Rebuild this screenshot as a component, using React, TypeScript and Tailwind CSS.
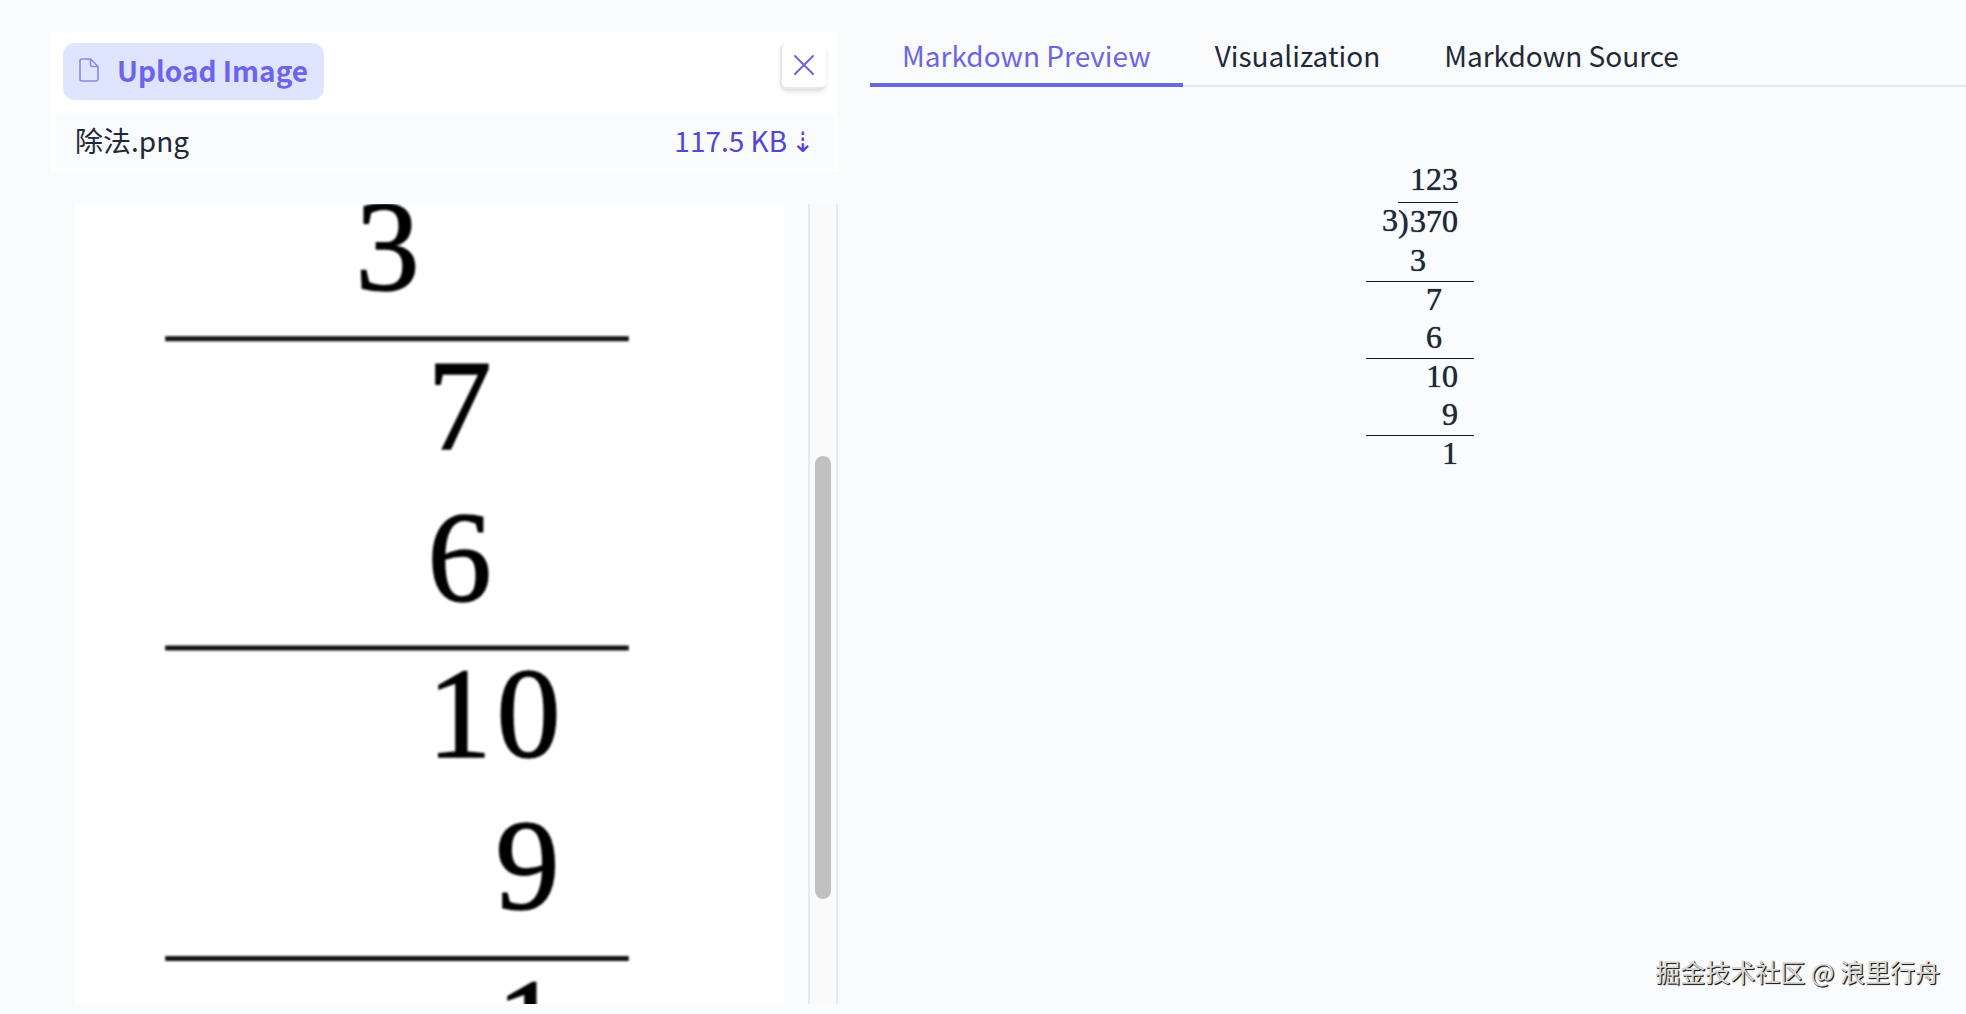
import React, { useState } from "react";

const TABS = ["Markdown Preview", "Visualization", "Markdown Source"];

// Steps under the dividend, "col" counts digit columns left empty on the right
const STEPS = [
  { value: "3", col: 2, line: true },
  { value: "7", col: 1, line: false },
  { value: "6", col: 1, line: true },
  { value: "10", col: 0, line: false },
  { value: "9", col: 0, line: true },
  { value: "1", col: 0, line: false },
];

const DIGITS = [
  { value: "3", x: 313, y: 86 },
  { value: "7", x: 385, y: 245 },
  { value: "6", x: 385, y: 397 },
  { value: "1", x: 385, y: 552 },
  { value: "0", x: 454, y: 552 },
  { value: "9", x: 453, y: 704 },
  { value: "1", x: 454, y: 863 },
];

function FileIcon() {
  return (
    <svg width="20" height="24" viewBox="0 0 20 24" fill="none" stroke="#8f88e3" strokeWidth="1.6" strokeLinejoin="round" aria-hidden="true">
      <path d="M11.5 1H3a2 2 0 0 0-2 2v18a2 2 0 0 0 2 2h14a2 2 0 0 0 2-2V8.5z" />
      <path d="M11.5 1v5.5a2 2 0 0 0 2 2H19" />
    </svg>
  );
}

function CloseIcon() {
  return (
    <svg width="22" height="22" viewBox="0 0 22 22" fill="none" stroke="#6d63e3" strokeWidth="2" strokeLinecap="round" aria-hidden="true">
      <path d="M2 2l18 18M20 2L2 20" />
    </svg>
  );
}

function UploadedImage() {
  return (
    <svg viewBox="0 0 710 799" preserveAspectRatio="xMidYMin slice" className="block h-full w-full" role="img" aria-label="除法.png">
      <g className="blur-[1px]">
        {[134.5, 443.5, 753.5].map(y => (
          <line key={y} x1="91" x2="554" y1={y} y2={y} stroke="#111" strokeWidth="5" />
        ))}
        {DIGITS.map(d => (
          <text key={d.y + "-" + d.x} x={d.x} y={d.y} textAnchor="middle" fontSize="128" fill="#000" stroke="#000" strokeWidth="1.5" className="font-['Liberation_Serif',serif]">
            {d.value}
          </text>
        ))}
      </g>
    </svg>
  );
}

function LongDivision() {
  return (
    <div className="flex flex-col items-end font-['Liberation_Serif',serif] text-[32px] text-gray-800 [text-shadow:0_0_1px_#1f2937]">
      <div className="pr-4 leading-[46px]">123</div>
      <div className="flex pr-4 pl-4 leading-9">
        <span>3</span>
        <span className="flex border-t border-gray-900">
          <span className="w-3">)</span>370
        </span>
      </div>
      {STEPS.map((s, i) => (
        <div
          key={i}
          className={`flex w-full justify-end pr-4 ${s.line ? "border-b border-gray-900 leading-[42px]" : "leading-[34px]"}`}
        >
          <span>{s.value}</span>
          {Array.from({ length: s.col }, (_, c) => (
            <span key={c} className="w-4" />
          ))}
        </div>
      ))}
    </div>
  );
}

export default function App() {
  const [active, setActive] = useState(TABS[0]);
  const [visible, setVisible] = useState(true);

  return (
    <div className="relative flex h-screen gap-8 overflow-hidden bg-[#fafbfd] pt-8 pl-[51px] font-['Noto_Sans_CJK_SC',sans-serif] text-[28px] text-gray-800">
      <section className="flex w-[41.1%] shrink-0 flex-col pb-[10px]">
        <div className="bg-white px-1 pb-1">
          <div className="flex items-start justify-between px-2 pt-[11px] pb-[14px]">
            <button className="flex h-[57px] items-center gap-[18px] rounded-xl bg-[#e0e5ff] px-4 pb-[3px] font-bold text-[#6c63ee]">
              <FileIcon />
              Upload Image
            </button>
            <button
              aria-label="Close"
              onClick={() => setVisible(false)}
              className="flex h-[46px] w-[46px] items-center justify-center rounded-md border-b-2 border-l-2 border-gray-200 bg-white shadow-md"
            >
              <CloseIcon />
            </button>
          </div>
          <div className="flex h-[54px] items-center justify-between bg-[#fafbfc] px-5 pb-[2px]">
            <span>除法.png</span>
            <a href="#download" className="flex items-center gap-1 text-[#5344d8]">
              117.5 KB <span>⇣</span>
            </a>
          </div>
        </div>

        <div className="mt-8 flex min-h-0 flex-1 justify-between pl-6">
          <div className="min-w-0 flex-1 overflow-hidden bg-white">{visible && <UploadedImage />}</div>
          <div className="ml-6 flex w-[30px] shrink-0 flex-col items-center border-x-2 border-[#e8eaeb] bg-[#fafafa]">
            <div className="h-[31.5%]" />
            <div className="h-[55.4%] w-4 rounded-full bg-[#c1c1c1]" />
          </div>
        </div>
      </section>

      <section className="flex min-w-0 flex-1 flex-col">
        <div role="tablist" className="flex h-[55px] border-b-2 border-gray-200">
          {TABS.map(tab => (
            <button
              key={tab}
              role="tab"
              aria-selected={tab === active}
              onClick={() => setActive(tab)}
              className={`-mb-[2px] border-b-4 px-8 pb-[6px] ${tab === active ? "border-[#6a68dd] text-[#6c66e6]" : "border-transparent"}`}
            >
              {tab}
            </button>
          ))}
        </div>
        <div className="flex justify-center pt-[69px] pl-1">
          <LongDivision />
        </div>
      </section>

      <p className="absolute right-[26px] bottom-[27px] text-[25px] leading-8 text-[#d8d8d8] [text-shadow:1px_1px_1px_#222,1px_1px_0_#333]">
        掘金技术社区 @ 浪里行舟
      </p>
    </div>
  );
}
